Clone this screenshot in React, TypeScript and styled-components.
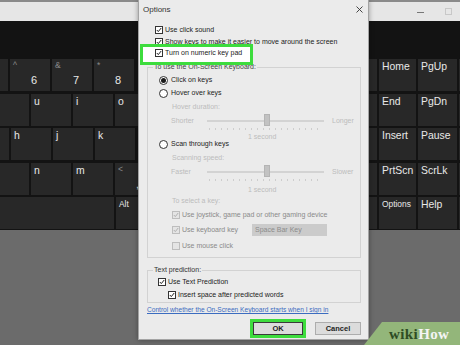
import styled, { createGlobalStyle } from 'styled-components';

const GlobalStyle = createGlobalStyle`
  html, body {
    margin: 0;
    padding: 0;
    background: #6b6b6b;
  }
  body {
    font-family: 'Liberation Sans', Arial, sans-serif;
  }
`;

/* keyboard window behind the dialog */
const Screen = styled.div`
  position: relative;
  width: 460px;
  height: 345px;
  overflow: hidden;
  display: flex;
  flex-direction: column;
  background: #6b6b6b;
`;

const WindowBar = styled.div`
  height: 19px;
  flex-shrink: 0;
  border-top: 2px solid #8a8a8a;
  background: #e6e6e6;
  display: flex;
  justify-content: flex-end;
  align-items: center;
  gap: 21px;
  padding-right: 8px;
`;

const WinGlyph = styled.span<{ $faint?: boolean }>`
  width: 7px;
  height: 7px;
  box-sizing: border-box;
  border: ${(p) => (p.$faint ? '1px solid #c8c8c8' : 'none')};
  border-top: 1px solid ${(p) => (p.$faint ? '#c8c8c8' : '#777')};
  margin-top: ${(p) => (p.$faint ? '0' : '7px')};
`;

const DarkStrip = styled.div`
  height: 37px;
  flex-shrink: 0;
  background: #131313;
`;

const KeyArea = styled.div`
  height: 172px;
  flex-shrink: 0;
  box-sizing: border-box;
  padding-top: 1px;
  background: #131313;
  display: flex;
  justify-content: space-between;
`;

const KeyBlock = styled.div<{ $w: number }>`
  width: ${(p) => p.$w}px;
  overflow: hidden;
  display: flex;
  flex-direction: column;
  gap: 2.5px;
`;

const KeyRow = styled.div<{ $offset: number }>`
  display: flex;
  gap: 2px;
  margin-left: ${(p) => p.$offset}px;
`;

const Key = styled.div<{ $w: number; $small?: boolean }>`
  flex-shrink: 0;
  width: ${(p) => p.$w}px;
  height: 32px;
  box-sizing: border-box;
  padding: 2px 3px;
  background: #282828;
  color: #e8e8e8;
  font-size: ${(p) => (p.$small ? '8.4px' : '10.4px')};
  line-height: 11px;
`;

const ShiftMark = styled.div`
  color: #8a8a8a;
  font-size: 8.5px;
  line-height: 9px;
`;

const MainMark = styled.div`
  margin: 5px 0 0 18px;
  font-size: 11px;
  line-height: 11px;
`;

type KeySpec = { w: number; label?: string; shift?: string; small?: boolean };

const leftRows: { offset: number; keys: KeySpec[] }[] = [
  {
    offset: -32,
    keys: [
      { w: 40 },
      { w: 40, shift: '^', label: '6' },
      { w: 40, shift: '&', label: '7' },
      { w: 40, shift: '*', label: '8' },
    ],
  },
  { offset: -11, keys: [{ w: 40 }, { w: 40, label: 'u' }, { w: 40, label: 'i' }, { w: 40, label: 'o' }] },
  { offset: -31, keys: [{ w: 40 }, { w: 40, label: 'h' }, { w: 40, label: 'j' }, { w: 40, label: 'k' }] },
  { offset: -11, keys: [{ w: 40 }, { w: 40, label: 'n' }, { w: 40, label: 'm' }, { w: 40, shift: '<', label: ',' }] },
  { offset: 0, keys: [{ w: 114 }, { w: 40, label: 'Alt', small: true }] },
];

const rightRows: [string, string, boolean?][] = [
  ['Home', 'PgUp'],
  ['End', 'PgDn'],
  ['Insert', 'Pause'],
  ['PrtScn', 'ScrLk'],
  ['Options', 'Help', true],
];

/* options dialog */
const Dialog = styled.div`
  position: absolute;
  left: 138px;
  top: 0;
  width: 231px;
  height: 340px;
  box-sizing: border-box;
  border: 1px solid #a4a4a4;
  border-top: none;
  background: #ebebeb;
  box-shadow: 0 0 5px rgba(0, 0, 0, 0.35);
  font-family: 'Liberation Sans', Arial, sans-serif;
  font-size: 7px;
  color: #222;
  display: flex;
  flex-direction: column;
`;

const TitleBar = styled.div`
  height: 19px;
  flex-shrink: 0;
  display: flex;
  align-items: center;
  justify-content: space-between;
  padding: 0 5px 1px 4px;
  font-size: 8px;
  color: #333;
`;

const Body = styled.div`
  padding-top: 5px;
  display: flex;
  flex-direction: column;
`;

const Row = styled.div<{ $h: number; $indent: number; $tone?: string }>`
  height: ${(p) => p.$h}px;
  flex-shrink: 0;
  padding-left: ${(p) => p.$indent}px;
  display: flex;
  align-items: flex-start;
  gap: 2px;
  line-height: 10px;
  white-space: nowrap;
  color: ${(p) => p.$tone ?? '#222'};
`;

const Highlight = styled.div`
  position: relative;
  width: 107px;
  height: 15px;
  margin-left: 4px;
  box-sizing: border-box;
  padding: 1px 0 0 12px;
  background: #fff;
  display: flex;
  align-items: flex-start;
  gap: 2px;
  line-height: 10px;
  white-space: nowrap;

  &::after {
    content: '';
    position: absolute;
    inset: -3px;
    border: 3px solid #3ddc3d;
  }
`;

const Box = styled.span<{ $dim?: boolean }>`
  flex-shrink: 0;
  width: 8px;
  height: 8px;
  margin-top: 1px;
  box-sizing: border-box;
  border: 1px solid ${(p) => (p.$dim ? '#bdbdbd' : '#333')};
  background: ${(p) => (p.$dim ? '#e4e4e4' : '#fff')};
  display: flex;
`;

const Radio = styled.span<{ $on?: boolean }>`
  flex-shrink: 0;
  width: 9px;
  height: 9px;
  margin: 0.5px 1px 0 0;
  box-sizing: border-box;
  border-radius: 50%;
  border: 1px solid #333;
  background: #fff;
  display: flex;
  align-items: center;
  justify-content: center;

  &::after {
    content: '';
    width: 5px;
    height: 5px;
    border-radius: 50%;
    background: ${(p) => (p.$on ? '#1a1a1a' : 'transparent')};
  }
`;

const Group = styled.fieldset<{ $pb: number; $mt?: number }>`
  margin: ${(p) => p.$mt ?? 0}px 0 0 8px;
  padding: 0 0 ${(p) => p.$pb}px 0;
  width: 214px;
  box-sizing: border-box;
  min-inline-size: 0;
  border: 1px solid #d2d2d2;
  display: flex;
  flex-direction: column;
`;

const Legend = styled.legend<{ $tone?: string }>`
  margin-left: 5px;
  padding: 0 1px;
  line-height: 10px;
  color: ${(p) => p.$tone ?? '#333'};
`;

const SliderLabel = styled.span`
  width: 34px;
  color: #bcbcbc;
`;

const Track = styled.div`
  position: relative;
  width: 117px;
  height: 10px;
  background: linear-gradient(#d3d3d3, #d3d3d3) 0 4px / 100% 2px no-repeat;

  &::after {
    content: '';
    position: absolute;
    left: 2px;
    right: 2px;
    top: 12px;
    height: 2px;
    background: repeating-linear-gradient(90deg, #cdcdcd 0 1px, transparent 1px 6px);
  }
`;

const Thumb = styled.span`
  position: absolute;
  left: 57px;
  top: -2px;
  width: 6px;
  height: 12px;
  box-sizing: border-box;
  background: #c2c2c2;
  border: 1px solid #b4b4b4;
`;

const EndLabel = styled.span`
  margin-left: 6px;
  color: #bcbcbc;
`;

const SpaceBox = styled.span`
  margin-top: -1px;
  width: 75px;
  height: 12px;
  box-sizing: border-box;
  padding-left: 3px;
  line-height: 12px;
  background: #cbcbcb;
  color: #8c8c8c;
`;

const FixedLabel = styled.span<{ $w: number }>`
  width: ${(p) => p.$w}px;
`;

const Link = styled.a`
  margin: 2px 0 0 8px;
  line-height: 10px;
  font-size: 6.6px;
  color: #3b6cc0;
  text-decoration: underline;
  white-space: nowrap;
`;

const Buttons = styled.div`
  margin-top: 4px;
  height: 19px;
  padding-left: 111px;
  display: flex;
  align-items: center;
  gap: 9px;
`;

const OkFrame = styled.div`
  width: 56px;
  height: 19px;
  box-sizing: border-box;
  border: 3px solid #3ddc3d;
  display: flex;
`;

const Button = styled.button<{ $w: number; $focus?: boolean }>`
  width: ${(p) => p.$w}px;
  height: 13px;
  padding: 0;
  box-sizing: border-box;
  border: 1px solid ${(p) => (p.$focus ? '#3a3a3a' : '#adadad')};
  background: #dcdcdc;
  font-family: 'Liberation Sans', Arial, sans-serif;
  font-size: 7.5px;
  font-weight: bold;
  color: #222;
`;

/* watermark */
const Watermark = styled.div`
  position: absolute;
  right: 0;
  bottom: 0;
  width: 96px;
  height: 23px;
  box-sizing: border-box;
  padding-left: 25px;
  background: #93b67a;
  clip-path: polygon(18px 0, 100% 0, 100% 100%, 0 100%);
  font-family: 'Liberation Serif', 'Times New Roman', serif;
  font-weight: bold;
  font-size: 15px;
  line-height: 24px;
  letter-spacing: 0.4px;
`;

const Wiki = styled.span`
  color: #2e4d24;
`;

const How = styled.span`
  color: #f4f4f4;
`;

function Check({ dim, on = true }: { dim?: boolean; on?: boolean }) {
  return (
    <Box $dim={dim}>
      {on && (
        <svg width="6" height="6" viewBox="0 0 6 6">
          <polyline
            points="0.8,3 2.3,4.6 5.2,1"
            fill="none"
            stroke={dim ? '#b0b0b0' : '#222'}
            strokeWidth="1"
          />
        </svg>
      )}
    </Box>
  );
}

function Slider({ low, high }: { low: string; high: string }) {
  return (
    <>
      <SliderLabel>{low}</SliderLabel>
      <Track>
        <Thumb />
      </Track>
      <EndLabel>{high}</EndLabel>
    </>
  );
}

const faint = '#bcbcbc';
const dimmed = '#8a8a8a';

export default function App() {
  return (
    <Screen>
      <GlobalStyle />
      <WindowBar>
        <WinGlyph />
        <WinGlyph $faint />
      </WindowBar>
      <DarkStrip />
      <KeyArea>
        <KeyBlock $w={138}>
          {leftRows.map((row, i) => (
            <KeyRow key={i} $offset={row.offset}>
              {row.keys.map((k, j) =>
                k.shift ? (
                  <Key key={j} $w={k.w}>
                    <ShiftMark>{k.shift}</ShiftMark>
                    <MainMark>{k.label}</MainMark>
                  </Key>
                ) : (
                  <Key key={j} $w={k.w} $small={k.small}>
                    {k.label}
                  </Key>
                )
              )}
            </KeyRow>
          ))}
        </KeyBlock>
        <KeyBlock $w={123}>
          {rightRows.map(([a, b, small], i) => (
            <KeyRow key={i} $offset={0}>
              <Key $w={40} />
              <Key $w={37} $small={small}>
                {a}
              </Key>
              <Key $w={39}>{b}</Key>
              <Key $w={40} />
            </KeyRow>
          ))}
        </KeyBlock>
      </KeyArea>

      <Dialog>
        <TitleBar>
          <span>Options</span>
          <svg width="7" height="7" viewBox="0 0 7 7">
            <path d="M0.5 0.5 L6.5 6.5 M6.5 0.5 L0.5 6.5" stroke="#333" strokeWidth="0.9" />
          </svg>
        </TitleBar>
        <Body>
          <Row $h={12} $indent={16}>
            <Check />
            <span>Use click sound</span>
          </Row>
          <Row $h={10} $indent={16}>
            <Check />
            <span>Show keys to make it easier to move around the screen</span>
          </Row>
          <Highlight>
            <Check />
            <span>Turn on numeric key pad</span>
          </Highlight>

          <Group $pb={4}>
            <Legend $tone="#444">To use the On-Screen Keyboard:</Legend>
            <Row $h={3} $indent={0} />
            <Row $h={13} $indent={11}>
              <Radio $on />
              <span>Click on keys</span>
            </Row>
            <Row $h={14} $indent={11}>
              <Radio />
              <span>Hover over keys</span>
            </Row>
            <Row $h={14} $indent={24} $tone={faint}>
              Hover duration:
            </Row>
            <Row $h={16} $indent={23} $tone={faint}>
              <Slider low="Shorter" high="Longer" />
            </Row>
            <Row $h={7} $indent={100} $tone={faint}>
              1 second
            </Row>
            <Row $h={14} $indent={11}>
              <Radio />
              <span>Scan through keys</span>
            </Row>
            <Row $h={14} $indent={24} $tone={faint}>
              Scanning speed:
            </Row>
            <Row $h={18} $indent={23} $tone={faint}>
              <Slider low="Faster" high="Slower" />
            </Row>
            <Row $h={11} $indent={100} $tone={faint}>
              1 second
            </Row>
            <Row $h={14} $indent={24} $tone={faint}>
              To select a key:
            </Row>
            <Row $h={15} $indent={24} $tone={dimmed}>
              <Check dim />
              <span>Use joystick, game pad or other gaming device</span>
            </Row>
            <Row $h={16} $indent={24} $tone={dimmed}>
              <Check dim />
              <FixedLabel $w={68}>Use keyboard key</FixedLabel>
              <SpaceBox>Space Bar Key</SpaceBox>
            </Row>
            <Row $h={12} $indent={24} $tone={dimmed}>
              <Check dim on={false} />
              <span>Use mouse click</span>
            </Row>
          </Group>

          <Group $pb={3} $mt={7}>
            <Legend>Text prediction:</Legend>
            <Row $h={2} $indent={0} />
            <Row $h={13} $indent={10}>
              <Check />
              <span>Use Text Prediction</span>
            </Row>
            <Row $h={9} $indent={20}>
              <Check />
              <span>Insert space after predicted words</span>
            </Row>
          </Group>

          <Link>Control whether the On-Screen Keyboard starts when I sign in</Link>

          <Buttons>
            <OkFrame>
              <Button $w={50} $focus>
                OK
              </Button>
            </OkFrame>
            <Button $w={46}>Cancel</Button>
          </Buttons>
        </Body>
      </Dialog>

      <Watermark>
        <Wiki>wiki</Wiki>
        <How>How</How>
      </Watermark>
    </Screen>
  );
}
